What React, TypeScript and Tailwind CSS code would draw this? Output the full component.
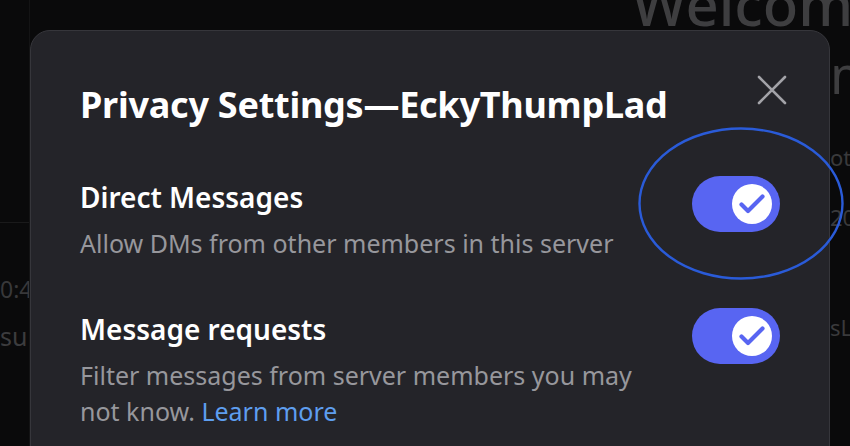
import React from 'react';

const Toggle: React.FC = () => (
   <div className="w-[88px] h-[56px] rounded-full bg-[#5865f2] flex items-center justify-end pr-[8px] shrink-0">
      <div className="w-[40px] h-[40px] rounded-full bg-white flex items-center justify-center">
         <svg width="40" height="40" viewBox="0 0 40 40" fill="none">
            <path d="M9.5 20.5 L16 27 L30.5 12.5" stroke="#5865f2" strokeWidth="4.2" strokeLinecap="round" strokeLinejoin="round" />
         </svg>
      </div>
   </div>
);

const App: React.FC = () => {
   return (
      <div className="relative w-[850px] h-[446px] overflow-hidden bg-[#0a0a0b] font-['Noto_Sans',sans-serif]">
         {/* backdrop: dimmed page behind the dialog */}
         <div className="flex h-full">
            <div className="w-[30px] shrink-0 border-r border-[#141415] overflow-hidden pt-[222px]">
               <div className="h-px bg-[#1a1a1b] w-full"></div>
               <p className="mt-[52px] text-[23px] leading-[28px] text-[#38383a] whitespace-nowrap">0:4</p>
               <p className="mt-[18px] text-[25px] leading-[30px] text-[#3c3c3e] whitespace-nowrap">sur</p>
            </div>
            <div className="flex-1 flex flex-col items-end overflow-hidden">
               <div className="w-[218px] -mt-[36px]">
                  <p className="text-[58px] leading-[80px] font-medium text-[#3e3e40] whitespace-nowrap">Welcome</p>
                  <p className="pl-[198px] text-[52px] leading-[60px] text-[#3e3e40] whitespace-nowrap">m</p>
               </div>
               <div className="w-[20px] overflow-hidden text-[22px] leading-[30px] text-[#3a3a3c] whitespace-nowrap">
                  <p className="mt-[38px]">ot</p>
                  <p className="mt-[30px]">202</p>
                  <p className="mt-[80px]">sL</p>
               </div>
            </div>
         </div>

         {/* dialog */}
         <div className="absolute left-[30px] top-[30px] w-[800px] h-[440px] rounded-[20px] bg-[#242429] border border-[#36363b] pl-[49px] pr-[42px] pt-[44px]">
            <div className="flex justify-between items-start">
               <h1 className="mt-[8px] text-[36px] leading-[44px] font-bold text-white tracking-[-0.25px]">Privacy Settings—EckyThumpLad</h1>
               <button className="text-[#a3a3a8]">
                  <svg width="30" height="30" viewBox="0 0 30 30" fill="none">
                     <path d="M2 2 L28 28 M28 2 L2 28" stroke="currentColor" strokeWidth="2.6" strokeLinecap="round" />
                  </svg>
               </button>
            </div>

            <div className="mt-[52px] flex justify-between items-start pr-[7px]">
               <div>
                  <h2 className="text-[28px] leading-[36px] font-semibold text-white">Direct Messages</h2>
                  <p className="mt-[10px] text-[25px] leading-[36px] text-[#97979c]">Allow DMs from other members in this server</p>
               </div>
               <div className="mt-[-3px]">
                  <Toggle />
               </div>
            </div>

            <div className="mt-[50px] flex justify-between items-start pr-[7px]">
               <div>
                  <h2 className="text-[28px] leading-[36px] font-semibold text-white">Message requests</h2>
                  <p className="mt-[10px] w-[580px] text-[25px] leading-[36px] text-[#97979c]">
                     Filter messages from server members you may not know. <span className="text-[#5e9eef]">Learn more</span>
                  </p>
               </div>
               <div className="mt-[-3px]">
                  <Toggle />
               </div>
            </div>
         </div>

         {/* annotation ring round the first switch */}
         <svg className="absolute left-[638px] top-[127px]" width="206" height="153" viewBox="0 0 206 153" fill="none">
            <ellipse cx="103" cy="76.5" rx="101.5" ry="75" stroke="#2a5bd8" strokeWidth="2.4" />
         </svg>
      </div>
   );
};

export default App;
